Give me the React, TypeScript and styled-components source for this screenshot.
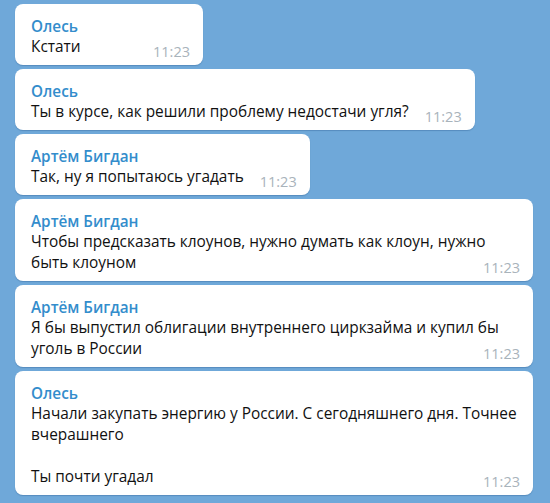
import styled, { createGlobalStyle } from 'styled-components'

const GlobalStyle = createGlobalStyle`
  html, body {
    margin: 0;
    padding: 0;
    background: #6fa8d9;
  }
`

interface IMessage {
  id: number
  author: string
  text: string
  time: string
}

const messages: IMessage[] = [
  { id: 1, author: 'Олесь', text: 'Кстати', time: '11:23' },
  { id: 2, author: 'Олесь', text: 'Ты в курсе, как решили проблему недостачи угля?', time: '11:23' },
  { id: 3, author: 'Артём Бигдан', text: 'Так, ну я попытаюсь угадать', time: '11:23' },
  { id: 4, author: 'Артём Бигдан', text: 'Чтобы предсказать клоунов, нужно думать как клоун, нужно быть клоуном', time: '11:23' },
  { id: 5, author: 'Артём Бигдан', text: 'Я бы выпустил облигации внутреннего циркзайма и купил бы уголь в России', time: '11:23' },
  { id: 6, author: 'Олесь', text: 'Начали закупать энергию у России. С сегодняшнего дня. Точнее вчерашнего\n\nТы почти угадал', time: '11:23' },
]

const Chat = styled.div`
  display: flex;
  flex-direction: column;
  align-items: flex-start;
  gap: 4px;
  width: 550px;
  height: 503px;
  box-sizing: border-box;
  padding: 4px 0 0 15px;
  overflow: hidden;
  font-family: 'Open Sans', 'Segoe UI', sans-serif;
`

const Bubble = styled.div`
  min-width: 188px;
  max-width: 518px;
  box-sizing: border-box;
  padding: 12px 13px 4px 16px;
  background: #fff;
  border-radius: 8px;
  box-shadow: 0 1px 1px rgba(40, 90, 140, 0.35);
`

const Author = styled.div`
  font-size: 15.3px;
  line-height: 20px;
  font-weight: 600;
  color: #338dcc;
  white-space: nowrap;
`

const Text = styled.div`
  font-size: 15.4px;
  line-height: 21px;
  color: #111;
  white-space: pre-wrap;
`

const Time = styled.span`
  float: right;
  margin: 7px 0 0 16px;
  font-size: 14.5px;
  line-height: 18px;
  color: #a9b3bb;
`

export default function App (): JSX.Element {
  return (
    <>
      <GlobalStyle />
      <Chat>
        {messages.map(message => (
          <Bubble key={message.id}>
            <Author>{message.author}</Author>
            <Text>
              {message.text}
              <Time>{message.time}</Time>
            </Text>
          </Bubble>
        ))}
      </Chat>
    </>
  )
}
